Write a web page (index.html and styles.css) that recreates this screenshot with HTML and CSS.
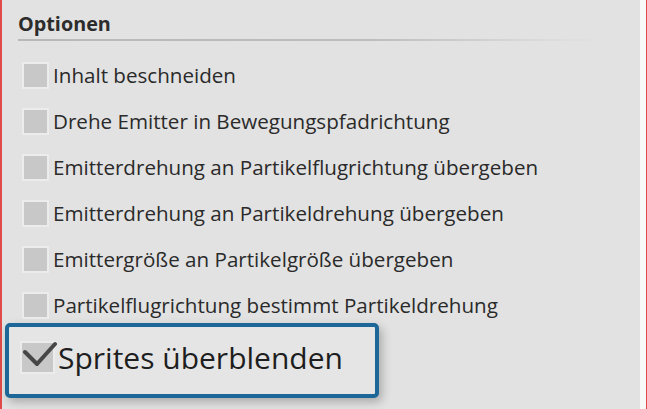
FILE: index.html
```html
<!DOCTYPE html>
<html>
<head>
<meta charset="utf-8">
<link rel="stylesheet" href="styles.css">
</head>
<body>
<div class="frame">
  <div class="panel">
    <h2 class="title">Optionen</h2>
    <div class="rule"></div>
    <ul class="options">
      <li class="opt"><span class="box"></span><span class="label">Inhalt beschneiden</span></li>
      <li class="opt"><span class="box"></span><span class="label">Drehe Emitter in Bewegungspfadrichtung</span></li>
      <li class="opt"><span class="box"></span><span class="label">Emitterdrehung an Partikelflugrichtung übergeben</span></li>
      <li class="opt"><span class="box"></span><span class="label">Emitterdrehung an Partikeldrehung übergeben</span></li>
      <li class="opt"><span class="box"></span><span class="label">Emittergröße an Partikelgröße übergeben</span></li>
      <li class="opt"><span class="box"></span><span class="label">Partikelflugrichtung bestimmt Partikeldrehung</span></li>
    </ul>
  </div>
  <div class="strip"></div>
  <div class="highlight">
    <span class="bigbox"><svg viewBox="0 0 35 33" width="35" height="33"><path d="M3 11 L15 23 L33 3" fill="none" stroke="#474747" stroke-width="4" stroke-linejoin="round" stroke-linecap="round"/></svg></span>
    <span class="biglabel">Sprites überblenden</span>
  </div>
</div>
</body>
</html>
```
FILE: styles.css
```css
html, body {
  margin: 0;
  padding: 0;
}
body {
  width: 647px;
  height: 409px;
  background: #e2e2e2;
  overflow: hidden;
  font-family: "Open Sans", "DejaVu Sans", sans-serif;
  color: #2e2e2e;
}
.frame {
  position: relative;
  height: 409px;
  display: flex;
  border-left: 2px solid #e04a4a;
  border-right: 1px solid #e04a4a;
  box-sizing: border-box;
}
.panel {
  flex: 1;
  padding: 0 0 0 16px;
}
.strip {
  width: 6px;
  background: #f8f8f8;
}
.title {
  margin: 0;
  padding-top: 12px;
  font-size: 19.8px;
  font-weight: bold;
  line-height: 24px;
  color: #2c2c2c;
}
.rule {
  margin-top: 3px;
  width: 590px;
  height: 2px;
  background: linear-gradient(to right, #b8b8b8 0%, #bdbdbd 60%, #dcdcdc 90%, #e2e2e2 100%);
}
.options {
  list-style: none;
  margin: 0;
  padding: 0;
  padding-top: 20px;
}
.opt {
  display: flex;
  align-items: center;
  height: 28px;
  margin-top: 18px;
}
.opt:first-child { margin-top: 0; }
.box {
  width: 23px;
  height: 23px;
  margin-left: 4px;
  background: #c8c8c8;
  border: 2px solid #ececec;
  box-sizing: content-box;
  flex: none;
}
.label {
  margin-left: 4px;
  font-size: 20.6px;
  color: #2a2a2a;
  white-space: nowrap;
}
.highlight {
  position: absolute;
  left: 3px;
  top: 323px;
  width: 366px;
  height: 61px;
  padding-bottom: 6px;
  border: 4px solid #1c6698;
  border-radius: 5px;
  background: #e5e5e5;
  box-shadow: 3px 4px 10px rgba(0,0,0,0.25);
  display: flex;
  align-items: center;
}
.bigbox {
  margin-left: 11px;
  width: 31px;
  height: 29px;
  background: #c8c8c8;
  border: 2px solid #ececec;
  display: flex;
  flex: none;
  position: relative;
}
.bigbox svg {
  position: absolute;
  left: 0;
  top: -2px;
}
.biglabel {
  margin-left: 3px;
  font-size: 30px;
  color: #1e1e1e;
  white-space: nowrap;
}
```
